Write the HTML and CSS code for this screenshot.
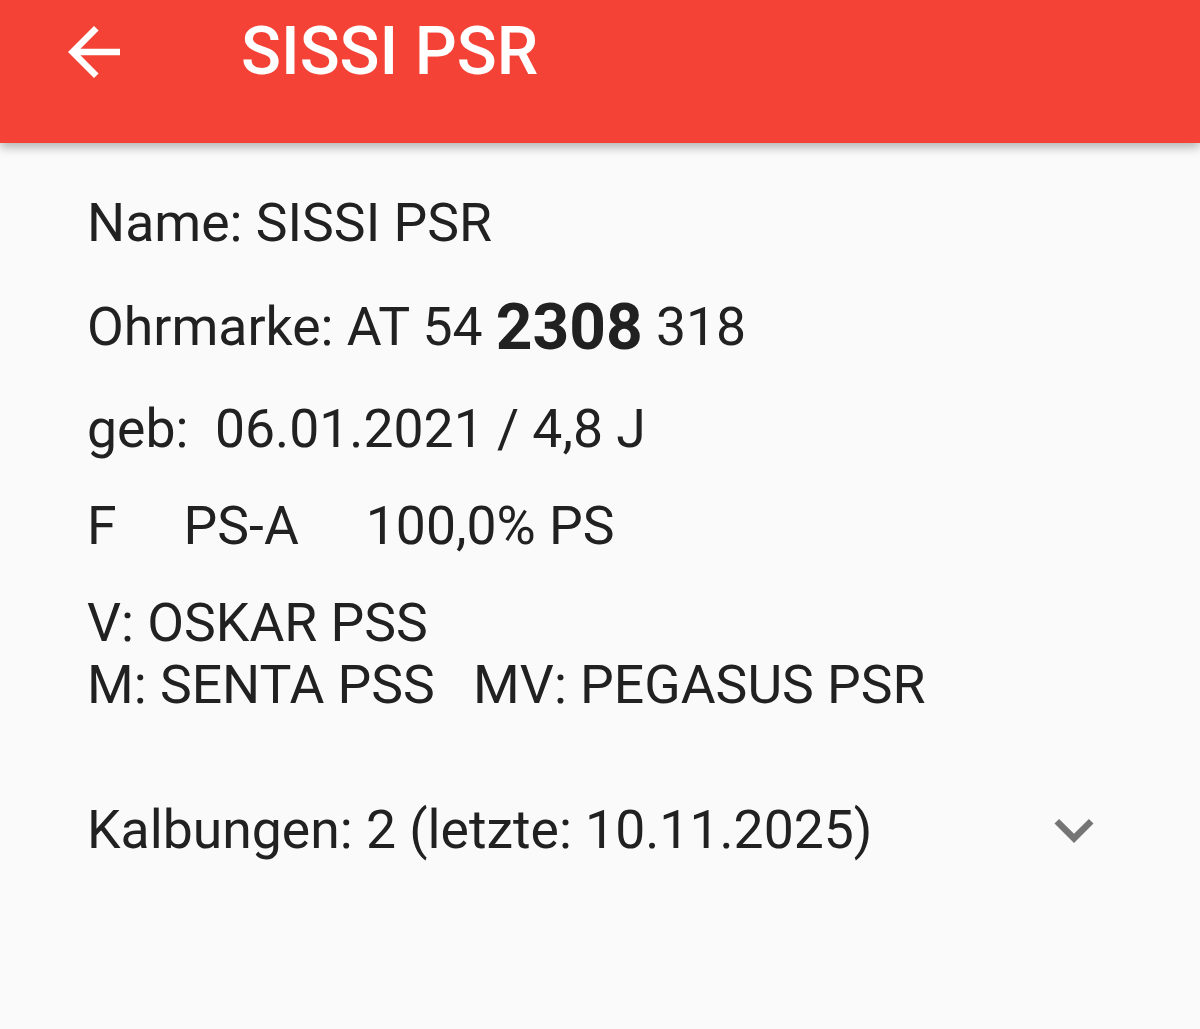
FILE: index.html
```html
<!DOCTYPE html>
<html lang="de">

<head>
  <meta charset="UTF-8">
  <meta name="viewport" content="width=device-width, initial-scale=1.0">
  <title>SISSI PSR</title>
  <link rel="stylesheet" href="styles.css">
</head>

<body>
  <header class="appbar">
    <div class="toolbar">
      <svg class="back" viewBox="0 0 24 24" width="78" height="78">
        <path d="M20 11H7.83l5.59-5.59L12 4l-8 8 8 8 1.41-1.41L7.83 13H20v-2z" fill="#fff"/>
      </svg>
      <h1 class="title">SISSI PSR</h1>
    </div>
  </header>

  <main class="details">
    <div class="row row-name">Name: SISSI PSR</div>
    <div class="row row-tag">Ohrmarke: AT 54 <b class="tag-no">2308</b> 318</div>
    <div class="row row-born">geb:&nbsp; 06.01.2021 / 4,8 J</div>
    <div class="row row-breed">
      <span>F</span>
      <span>PS-A</span>
      <span>100,0% PS</span>
    </div>
    <div class="parents">
      <div class="row">V: OSKAR PSS</div>
      <div class="row">M: SENTA PSS <span class="mv">MV: PEGASUS PSR</span></div>
    </div>
    <div class="row calvings">
      <span>Kalbungen: 2 (letzte: 10.11.2025)</span>
      <svg class="expand" viewBox="0 0 24 24" width="78" height="78">
        <path d="M16.59 8.59L12 13.17 7.41 8.59 6 10l6 6 6-6z" fill="#757575"/>
      </svg>
    </div>
  </main>
</body>

</html>
```

FILE: styles.css
```css
body {
  font-family: Roboto, "Liberation Sans", sans-serif;
  margin: 0;
  background-color: #fafafa;
  color: #212121;
}

.appbar {
  background-color: #f44336;
  height: 143px;
  box-shadow: 0 4px 10px rgba(0, 0, 0, 0.3);
}

.toolbar {
  display: flex;
  align-items: center;
  height: 104px;
  padding-left: 55px;
}

.title {
  margin: 0 0 0 108px;
  color: #fff;
  font-size: 66px;
  font-weight: 500;
  line-height: 76px;
}

.details {
  padding: 49px 0 0 87px;
}

.row {
  font-size: 53.5px;
  line-height: 62px;
  height: 62px;
}

.row-tag {
  margin-top: 42px;
}

.tag-no {
  font-size: 64px;
  font-weight: 700;
  vertical-align: -4px;
  line-height: 62px;
}

.row-born {
  margin-top: 40px;
}

.row-breed {
  display: flex;
  gap: 67px;
  margin-top: 35px;
}

.parents {
  margin-top: 35px;
}

.mv {
  margin-left: 25px;
}

.calvings {
  display: flex;
  justify-content: space-between;
  align-items: center;
  margin-top: 83px;
  padding-right: 87px;
}
```
